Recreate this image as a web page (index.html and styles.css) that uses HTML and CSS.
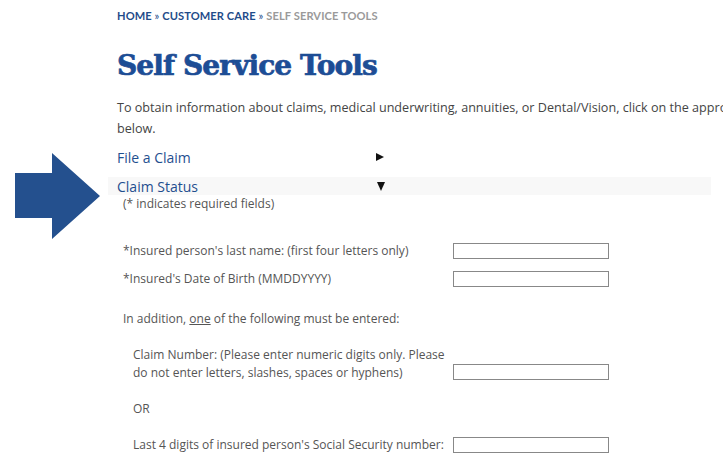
FILE: index.html
```html
<!DOCTYPE html>
<html lang="en">
<head>
<meta charset="utf-8">
<title>Self Service Tools</title>
<link rel="stylesheet" href="styles.css">
</head>
<body>
<svg class="pointer" width="90" height="88" viewBox="0 0 90 88" aria-hidden="true">
  <polygon points="0,20 37,20 37,0 85,43 37,86 37,65 0,65" fill="#24508e"/>
</svg>
<main class="page">
  <nav class="crumbs">
    <a href="#">HOME</a> <span class="sep">&raquo;</span> <a href="#">CUSTOMER CARE</a> <span class="sep">&raquo;</span> <span class="current">SELF SERVICE TOOLS</span>
  </nav>
  <h1 class="title">Self Service Tools</h1>
  <p class="intro">To obtain information about claims, medical underwriting, annuities, or Dental/Vision, click on the appropriate link below.</p>

  <div class="tool">
    <div class="tool-head"><span class="tool-name">File a Claim</span><span class="caret right"></span></div>
  </div>
  <div class="tool open">
    <div class="tool-head"><span class="tool-name">Claim Status</span><span class="caret down"></span></div>
    <p class="note">(* indicates required fields)</p>
    <form class="status-form">
      <div class="row">
        <label class="lbl">*Insured person's last name: (first four letters only)</label>
        <input class="field" type="text">
      </div>
      <div class="row">
        <label class="lbl">*Insured's Date of Birth (MMDDYYYY)</label>
        <input class="field" type="text">
      </div>
      <p class="addition">In addition, <u>one</u> of the following must be entered:</p>
      <div class="row sub tall">
        <label class="lbl">Claim Number: (Please enter numeric digits only. Please do not enter letters, slashes, spaces or hyphens)</label>
        <input class="field" type="text">
      </div>
      <p class="or">OR</p>
      <div class="row sub last">
        <label class="lbl">Last 4 digits of insured person's Social Security number:</label>
        <input class="field" type="text">
      </div>
    </form>
  </div>
</main>
</body>
</html>
```
FILE: styles.css
```css
html, body {
  margin: 0;
  padding: 0;
  background: #fff;
  overflow: hidden;
}

body {
  font-family: "Open Sans", "Liberation Sans", sans-serif;
  color: #4a4a4a;
  width: 723px;
  height: 453px;
  position: relative;
}

/* call-out arrow pointing at the open section */
.pointer {
  position: absolute;
  left: 15px;
  top: 153px;
}

.page {
  width: 820px;
  padding: 9px 0 0 117px;
  display: flex;
  flex-direction: column;
}

.crumbs {
  font-family: "Lato", "Open Sans", sans-serif;
  font-size: 11.1px;
  font-weight: 700;
  letter-spacing: 0.1px;
  line-height: 14px;
  color: #1f4c8a;
  white-space: nowrap;
}
.crumbs a { color: #1f4c8a; text-decoration: none; }
.crumbs .sep { font-weight: 400; }
.crumbs .current { color: #9a9a9a; }

.title {
  margin: 25px 0 0 0;
  font-family: "DejaVu Serif", serif;
  font-weight: 700;
  font-size: 28px;
  letter-spacing: -0.9px;
  line-height: 36px;
  color: #1d4d95;
  -webkit-text-stroke: 0.7px #1d4d95;
}

.intro {
  margin: 13px 0 0 0;
  width: 690px;
  font-size: 12.6px;
  line-height: 21px;
  color: #444;
}

.tool { display: flex; flex-direction: column; }

.tool-head {
  display: flex;
  align-items: center;
  height: 18px;
  margin-top: 9px;
}
.tool-name {
  width: 259px;
  font-size: 14px;
  color: #1f4f8f;
}

/* disclosure triangles */
.caret { width: 0; height: 0; border-style: solid; }
.caret.right {
  border-width: 4px 0 4px 8px;
  border-color: transparent transparent transparent #111;
}
.caret.down {
  margin-left: 1px;
  border-width: 9px 4px 0 4px;
  border-color: #111 transparent transparent transparent;
}

.tool.open .tool-head {
  margin-top: 11px;
  margin-left: -9px;
  padding-left: 9px;
  width: 594px;
  background: #f8f8f8;
}

.note {
  margin: 0 0 0 6px;
  font-size: 12px;
  line-height: 17px;
  color: #555;
}

.status-form {
  margin: 25px 0 0 6px;
  display: flex;
  flex-direction: column;
  font-size: 12px;
  color: #555;
}

.row {
  display: flex;
  align-items: center;
  height: 28px;
}
.row .lbl { width: 330px; line-height: 18px; }
.row.sub .lbl { width: 320px; padding-left: 10px; }

.row.tall {
  height: auto;
  align-items: flex-end;
  margin-top: 18px;
}
.row.tall .field { margin-bottom: 2px; }
.row.last { margin-top: 13px; }

.field {
  box-sizing: border-box;
  width: 156px;
  height: 16px;
  margin: 0;
  padding: 1px;
  border: 1px solid #888;
  border-radius: 0;
  background: #fff;
}

.addition {
  margin: 17px 0 0 0;
  line-height: 18px;
}
.or {
  margin: 18px 0 0 10px;
  line-height: 18px;
}
```
